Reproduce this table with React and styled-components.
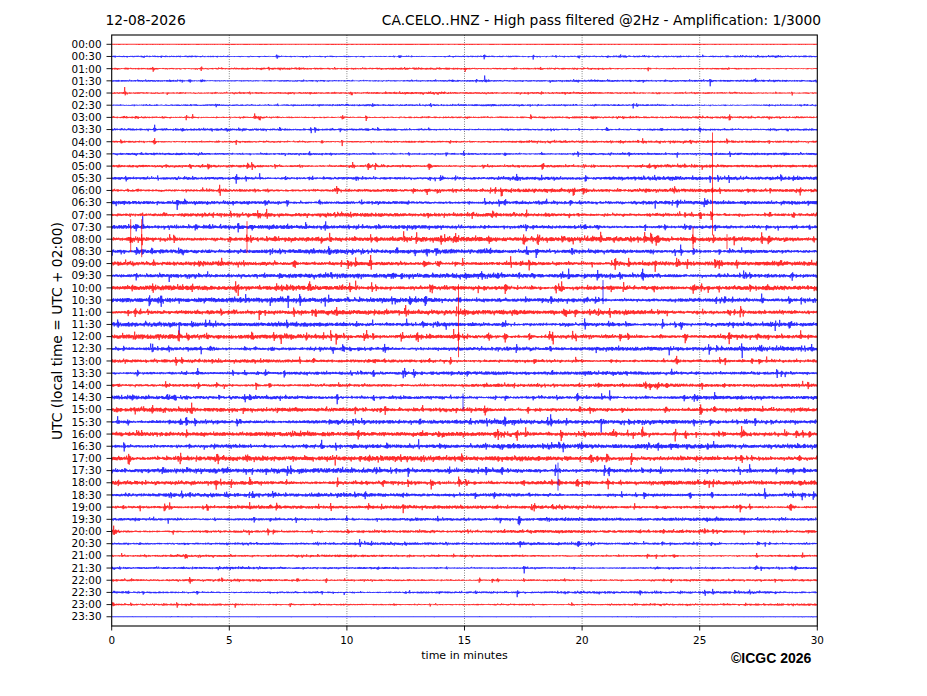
import React, { useMemo } from 'react';
import styled, { createGlobalStyle } from 'styled-components';

// plot geometry, in svg coords (svg sits at page x=111, y=34)
const ROWS = 48;
const PLOT_W = 707;
const PLOT_H = 593;
const X0 = 0.7;
const X1 = 706.3;
const Y_TOP = 1;
const Y_BOT = 592;
const ROW0 = 10.3;
const STEP = 12.18;
const PX_PER_MIN = (X1 - X0) / 30;
const DX = 0.5;
const PAGE_X = 111;

const LEVELS = [
  0.05, 0.75, 0.8, 0.85, 0.85, 0.8, 0.85, 0.95, 0.95, 1.0, 1.2, 1.4,
  1.4, 1.5, 1.5, 1.6, 1.9, 1.7, 1.8, 1.8, 1.9, 1.9, 1.8, 1.7,
  1.8, 1.6, 1.4, 1.4, 1.4, 1.5, 1.7, 1.7, 1.8, 1.8, 1.9, 1.8,
  1.7, 1.5, 1.4, 1.3, 1.2, 1.1, 0.95, 0.95, 0.95, 0.95, 0.85, 0.08,
];

// [page x, half amplitude px, width px]
const EVENTS = [
  [],
  [],
  [[648, 3, 2]],
  [[170, 2, 2], [190, 2.5, 3]],
  [[659, 2.5, 2], [792, 2, 2]],
  [],
  [[366, 3.5, 2], [623, 2.5, 2]],
  [[280, 4.5, 2], [311, 3.5, 2], [340, 2.5, 2], [551, 2, 2], [579, 2, 2]],
  [[121, 4, 2], [611, 2.5, 2]],
  [[373, 2.5, 2], [409, 2.5, 2], [578, 4, 2], [711, 2.5, 2], [730, 4, 3]],
  [[275, 3, 2], [410, 2.5, 3], [628, 3, 2], [649, 5, 3], [680, 3, 2], [702, 3, 2]],
  [[430, 3, 3], [510, 3, 4], [655, 4.5, 6], [670, 4, 3], [785, 2.5, 2]],
  [[337, 5, 3], [440, 3, 2], [712, 6, 3], [720, 5, 3], [748, 3, 2]],
  [[265, 4, 6], [320, 5, 4], [655, 4, 3], [745, 3, 2]],
  [[130, 3, 2], [210, 3, 3], [380, 3, 2], [490, 3, 2], [680, 4, 3], [712, 4, 3]],
  [[210, 3.5, 3], [430, 3, 3], [510, 3, 3], [690, 4, 4]],
  [[130, 6, 2], [142, 8, 3], [247, 8, 3], [355, 5, 8], [449, 4, 3], [533, 3, 3], [672, 4, 4], [810, 3, 2]],
  [[160, 4, 3], [445, 3, 2], [470, 3, 3], [555, 3, 3], [700, 3, 2]],
  [[147, 3.5, 3], [220, 3, 3], [405, 3, 3], [558, 3.5, 3], [600, 3, 2], [737, 6, 4]],
  [[350, 3.5, 2], [620, 5, 5], [790, 3, 2]],
  [[152, 3, 2], [298, 3, 3], [350, 6, 4], [440, 3, 2]],
  [[247, 3, 2], [395, 5, 4], [500, 3, 3], [815, 3, 2]],
  [[164, 3, 2], [265, 5, 3], [459, 4, 2], [740, 7, 4]],
  [[148, 3, 2], [295, 3, 2], [438, 5, 4], [503, 5, 3], [565, 3, 2]],
  [[380, 3.5, 3], [458, 7, 3], [505, 7, 4], [576, 6, 4], [768, 5, 3]],
  [[245, 4, 3], [350, 5, 5], [383, 3, 2], [462, 3, 2], [658, 3, 2], [705, 3, 2]],
  [[313, 7, 2], [385, 4, 2], [480, 3, 2], [560, 3, 2]],
  [[403, 4.5, 3], [530, 3, 2]],
  [[118, 3, 2], [538, 4, 2]],
  [[442, 4, 2], [602, 3, 2]],
  [[190, 4, 6], [440, 3, 3], [470, 3, 3], [528, 7, 4], [540, 4, 3]],
  [[512, 4, 3], [620, 3, 2]],
  [[130, 3, 4], [160, 3, 3], [498, 7, 3], [810, 5, 3]],
  [[124, 6, 3], [237, 3, 2], [597, 3, 3], [652, 3, 3], [700, 3, 3]],
  [[247, 8, 3], [262, 4, 2], [293, 5, 2], [407, 6, 2], [590, 4, 3], [650, 4, 2], [681, 4, 3], [790, 3, 2]],
  [[200, 3, 2], [560, 4, 2], [650, 4, 3], [685, 4, 3], [740, 3, 2], [788, 3, 2]],
  [[130, 3, 2], [559, 7, 2], [578, 7, 2], [621, 5, 2], [709, 6, 2]],
  [[182, 5, 2], [268, 4, 2], [560, 3, 2], [650, 3, 2], [805, 4, 2]],
  [[403, 5, 3], [497, 5, 4], [600, 3, 3]],
  [[168, 3, 2], [215, 3, 2], [468, 3, 2], [620, 3, 2]],
  [[268, 5, 4], [312, 3, 2], [434, 3, 2], [717, 5, 4]],
  [[140, 2.5, 2], [318, 3, 2], [578, 4, 3], [697, 3, 2]],
  [[122, 2.5, 2], [298, 2, 2], [677, 2.5, 2]],
  [[185, 2, 2], [218, 2.5, 3], [658, 3, 2], [779, 2, 2], [805, 2, 2]],
  [[222, 4, 2], [326, 4, 2], [493, 3, 2], [565, 3, 2], [775, 3, 2]],
  [[123, 3, 2], [322, 2.5, 2], [690, 2, 2], [705, 4, 2]],
  [[430, 2.5, 2], [610, 2, 2], [745, 2.5, 2]],
  [],
];

// long single spikes: [row, page x, up px, down px]
const SPIKES = [
  [12, 712.5, 58, 45],
  [16, 130.7, 20, 13],
  [16, 141.7, 20, 18],
  [16, 247, 18, 14],
  [16, 693, 12, 10],
  [16, 727, 5, 10],
  [22, 458.5, 28, 45],
  [21, 603, 20, 4],
  [29, 463, 4, 12],
  [35, 558, 8, 20],
];

const X_TICKS = [0, 5, 10, 15, 20, 25, 30];

function mulberry32(seed) {
  let a = seed;
  return function () {
    a |= 0;
    a = (a + 0x6d2b79f5) | 0;
    let t = Math.imul(a ^ (a >>> 15), 1 | a);
    t = (t + Math.imul(t ^ (t >>> 7), 61 | t)) ^ t;
    return ((t ^ (t >>> 14)) >>> 0) / 4294967296;
  };
}

function rowColor(i) {
  return i % 2 === 0 ? '#ff0000' : '#0000ff';
}

function rowY(i) {
  return ROW0 + i * STEP;
}

function isQuietRow(i) {
  return i === 0 || i === ROWS - 1;
}

function tickLabel(i) {
  return `${String(Math.floor(i / 2)).padStart(2, '0')}:${i % 2 ? '30' : '00'}`;
}

function buildTrace(i) {
  const rand = mulberry32(9173 + i * 1301);
  const level = LEVELS[i];
  const base = level * 1.0;
  const n = Math.floor((X1 - X0) / DX) + 1;
  const env = new Float32Array(n);
  const p1 = rand() * 6.28;
  const p2 = rand() * 6.28;
  for (let k = 0; k < n; k++) {
    env[k] = base * (1 + 0.18 * Math.sin(k * 0.004 + p1) + 0.12 * Math.sin(k * 0.021 + p2));
  }

  function burst(cx, amp, w) {
    const c = (cx - X0) / DX;
    const from = Math.max(0, Math.floor(c - (w * 1.5) / DX));
    const to = Math.min(n - 1, Math.ceil(c + (w * 4) / DX));
    for (let k = from; k <= to; k++) {
      const d = (k - c) * DX;
      const v =
        d < 0
          ? amp * (0.6 * Math.exp(d / 0.6) + 0.4 * Math.exp(d / (w * 0.3)))
          : amp * (0.6 * Math.exp(-d / 0.6) + 0.4 * Math.exp(-d / w));
      if (v > env[k]) env[k] = v;
    }
  }

  if (!isQuietRow(i)) {
    const count = Math.round(5 + level * level * 16);
    for (let b = 0; b < count; b++) {
      const cx = X0 + rand() * (X1 - X0);
      const amp = base * (1.5 + Math.pow(rand(), 2) * 3.8);
      burst(cx, amp, 1.5 + rand() * 5);
    }
  }
  EVENTS[i].forEach(([px, amp, w]) => burst(px - PAGE_X, amp * 1.1, w));

  const yc = rowY(i);
  let d = `M${X0} ${yc.toFixed(2)}`;
  for (let k = 0; k < n; k++) {
    const x = X0 + k * DX;
    let a = env[k] * (0.3 + 0.7 * rand());
    if (rand() < 0.07) a *= 1.7;
    const y = yc + (k % 2 ? a : -a);
    d += `L${x.toFixed(2)} ${y.toFixed(2)}`;
  }
  return d;
}

function Seismogram() {
  const traces = useMemo(
    () => Array.from({ length: ROWS }, (_, i) => buildTrace(i)),
    []
  );

  return (
    <Axes width={PLOT_W} height={PLOT_H} viewBox={`0 0 ${PLOT_W} ${PLOT_H}`}>
      <defs>
        <clipPath id="axes-clip">
          <rect x={X0} y={Y_TOP} width={X1 - X0} height={Y_BOT - Y_TOP} />
        </clipPath>
      </defs>

      {[5, 10, 15, 20, 25].map((m) => (
        <line
          key={m}
          x1={X0 + m * PX_PER_MIN}
          x2={X0 + m * PX_PER_MIN}
          y1={Y_TOP}
          y2={Y_BOT}
          stroke="#000"
          strokeOpacity="0.75"
          strokeWidth="0.8"
          strokeDasharray="0.8 1.6"
        />
      ))}

      <g clipPath="url(#axes-clip)" fill="none" strokeLinejoin="round">
        {traces.map((d, i) => (
          <path
            key={i}
            d={d}
            stroke={rowColor(i)}
            strokeWidth={isQuietRow(i) ? 1.1 : 0.65}
            strokeOpacity={isQuietRow(i) ? 0.8 : 1}
          />
        ))}
        {SPIKES.map(([row, px, up, down], k) => (
          <line
            key={k}
            x1={px - PAGE_X}
            x2={px - PAGE_X}
            y1={rowY(row) - up}
            y2={rowY(row) + down}
            stroke={rowColor(row)}
            strokeOpacity="0.8"
            strokeWidth="0.9"
          />
        ))}
      </g>

      <rect
        x={X0}
        y={Y_TOP}
        width={X1 - X0}
        height={Y_BOT - Y_TOP}
        fill="none"
        stroke="#000"
        strokeWidth="1.1"
      />

      <g stroke="#000" strokeWidth="0.9">
        {Array.from({ length: ROWS }, (_, i) => (
          <line key={i} x1={-4.5} x2={X0} y1={rowY(i)} y2={rowY(i)} />
        ))}
        {X_TICKS.map((m) => (
          <line
            key={m}
            x1={X0 + m * PX_PER_MIN}
            x2={X0 + m * PX_PER_MIN}
            y1={Y_BOT}
            y2={Y_BOT + 4.5}
          />
        ))}
      </g>
    </Axes>
  );
}

function App() {
  return (
    <>
      <GlobalStyle />
      <Figure>
        <TitleBar>
          <span>12-08-2026</span>
          <span>CA.CELO..HNZ - High pass filtered @2Hz - Amplification: 1/3000</span>
        </TitleBar>

        <PlotRow>
          <YLabelCell>
            <YLabel>UTC (local time = UTC + 02:00)</YLabel>
          </YLabelCell>
          <YTickColumn>
            {Array.from({ length: ROWS }, (_, i) => (
              <YTickLabel key={i}>{tickLabel(i)}</YTickLabel>
            ))}
          </YTickColumn>
          <Seismogram />
        </PlotRow>

        <XTickRow>
          {X_TICKS.map((m) => (
            <XTick key={m}>{m}</XTick>
          ))}
        </XTickRow>

        <Footer>
          <XLabel>time in minutes</XLabel>
          <Credit>©ICGC 2026</Credit>
        </Footer>
      </Figure>
    </>
  );
}

const GlobalStyle = createGlobalStyle`
  body {
    margin: 0;
    background: #ffffff;
  }
`;

const Figure = styled.div`
  width: 927px;
  height: 696px;
  overflow: hidden;
  background: #ffffff;
  color: #000000;
  font-family: 'DejaVu Sans', 'Liberation Sans', sans-serif;
`;

const TitleBar = styled.div`
  box-sizing: border-box;
  height: 34px;
  padding: 12px 106px 0 105.5px;
  display: flex;
  justify-content: space-between;
  font-size: 13.8px;
  line-height: 16px;
  white-space: nowrap;
`;

const PlotRow = styled.div`
  display: flex;
  height: ${PLOT_H}px;
`;

const YLabelCell = styled.div`
  width: 65px;
  flex-shrink: 0;
  display: flex;
  align-items: center;
  justify-content: flex-end;
`;

const YLabel = styled.div`
  writing-mode: vertical-rl;
  transform: rotate(180deg);
  font-size: 13.8px;
  line-height: 16px;
  white-space: nowrap;
`;

const YTickColumn = styled.div`
  box-sizing: border-box;
  width: 46px;
  flex-shrink: 0;
  padding: 4.2px 9.5px 0 0;
  display: flex;
  flex-direction: column;
  font-size: 10.4px;
`;

const YTickLabel = styled.div`
  height: ${STEP}px;
  line-height: ${STEP}px;
  text-align: right;
  flex-shrink: 0;
`;

const Axes = styled.svg`
  display: block;
  flex-shrink: 0;
  overflow: visible;
`;

const XTickRow = styled.div`
  margin: 7px 0 0 91.7px;
  width: 745.6px;
  display: flex;
  justify-content: space-between;
  font-size: 10.4px;
  line-height: 12px;
`;

const XTick = styled.span`
  width: 40px;
  text-align: center;
`;

const Footer = styled.div`
  margin: 3px 0 0 111.7px;
  width: 705.6px;
  display: grid;
  grid-template-columns: 1fr auto 1fr;
  align-items: start;
`;

const XLabel = styled.div`
  grid-column: 2;
  font-size: 11px;
  line-height: 13px;
`;

const Credit = styled.div`
  grid-column: 3;
  justify-self: end;
  margin: 1px 6px 0 0;
  font-family: 'Liberation Sans', Arial, sans-serif;
  font-weight: 700;
  font-size: 14px;
  line-height: 16px;
`;

export default App;
